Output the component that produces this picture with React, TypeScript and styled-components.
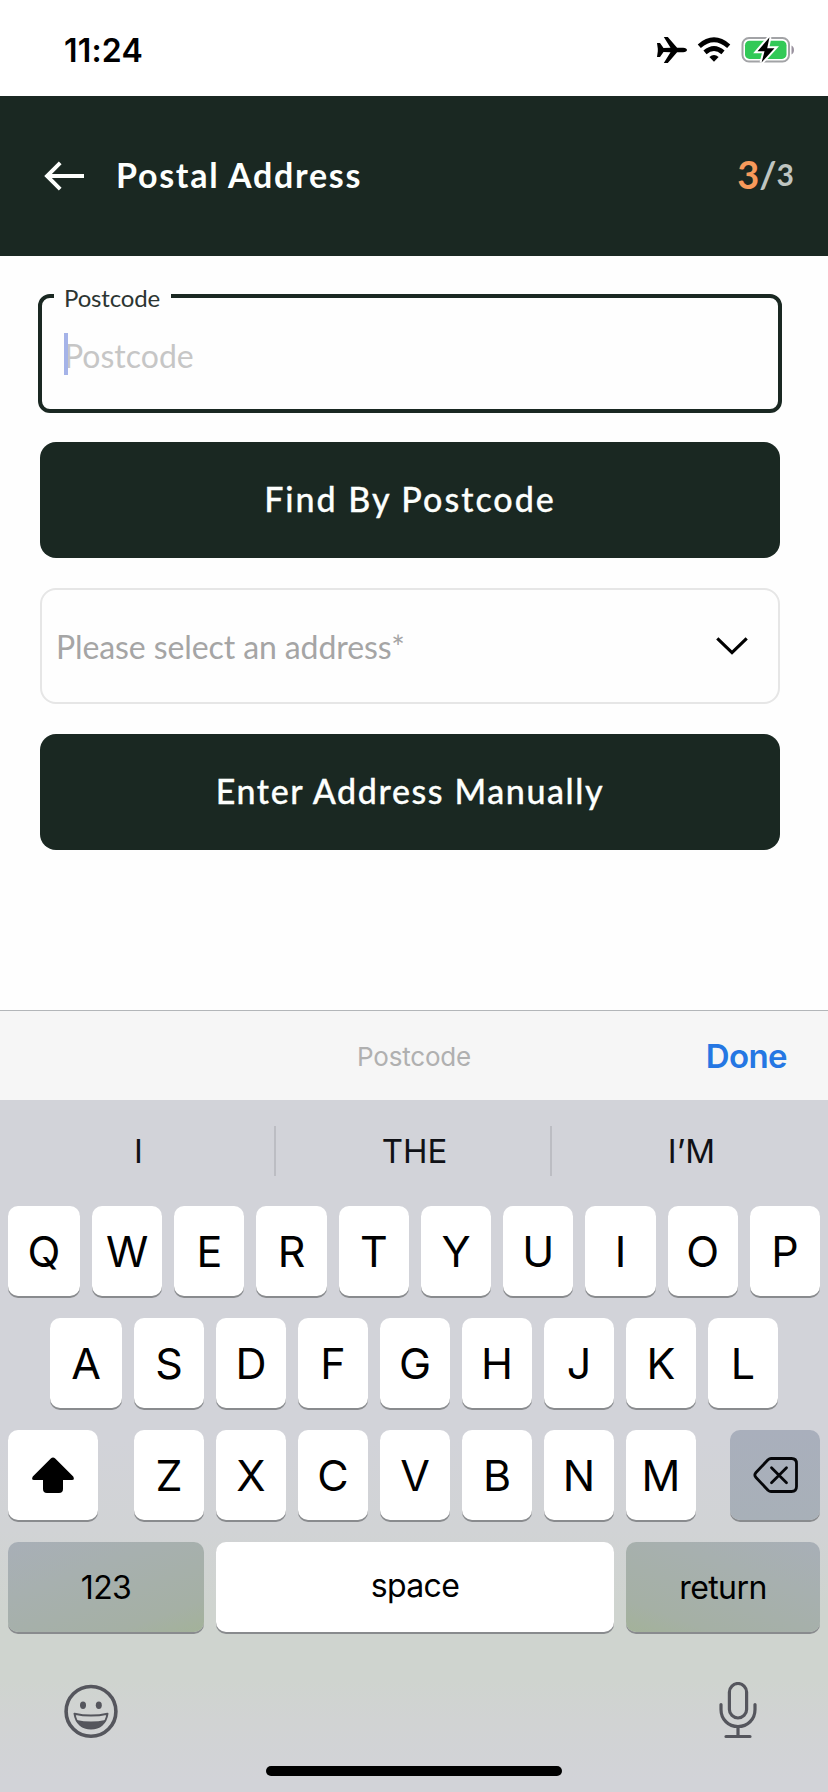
import React from "react";
import styled, { createGlobalStyle } from "styled-components";

const GlobalStyle = createGlobalStyle`
  * { box-sizing: border-box; }
  body { margin: 0; background: #fff; }
  button { border: 0; padding: 0; margin: 0; font: inherit; color: inherit; }
`;

const ink = "#1a2822";
const system = `Inter, "Liberation Sans", sans-serif`;
const brand = `Lato, "Open Sans", sans-serif`;

const Screen = styled.div`
  width: 828px;
  height: 1792px;
  display: flex;
  flex-direction: column;
  background: #fefefe;
  font-family: ${system};
  overflow: hidden;
`;

const StatusBar = styled.div`
  height: 96px;
  padding: 3px 33px 0 64px;
  display: flex;
  align-items: center;
  justify-content: space-between;
  background: #fff;
`;

const Clock = styled.span`
  padding-top: 1px;
  font-size: 32px;
  font-weight: 600;
  letter-spacing: 0.2px;
  color: #000;
`;

const StatusIcons = styled.div`
  display: flex;
  align-items: center;
  gap: 10px;
`;

const Header = styled.header`
  height: 160px;
  padding: 0 34px 0 44px;
  display: flex;
  align-items: center;
  background: ${ink};
  color: #fdfffd;
  font-family: ${brand};
`;

const Title = styled.h1`
  margin: 0 auto 4px 29px;
  font-size: 34px;
  font-weight: 700;
  letter-spacing: 1.7px;
`;

const Steps = styled.div`
  display: flex;
  align-items: center;
  font-weight: 700;
  line-height: 46px;
  margin-bottom: 4px;
  color: #bfc5c1;
`;

const Step = styled.span<{ $size: number; $color?: string }>`
  font-size: ${(p) => p.$size}px;
  color: ${(p) => p.$color ?? "inherit"};
`;

const Form = styled.main`
  height: 754px;
  padding: 38px 46px 0 38px;
  display: flex;
  flex-direction: column;
  font-family: ${brand};
`;

const Field = styled.div`
  position: relative;
  height: 119px;
  padding: 3px 22px 0;
  display: flex;
  align-items: center;
  border: 4px solid ${ink};
  border-radius: 12px;
`;

const FieldLabel = styled.label`
  position: absolute;
  left: 12px;
  top: -15px;
  padding: 0 11px 0 10px;
  background: #fefefe;
  font-size: 24px;
  line-height: 30px;
  letter-spacing: -0.15px;
  color: #2c3532;
`;

const Caret = styled.i`
  position: absolute;
  left: 22px;
  top: 35px;
  width: 4px;
  height: 42px;
  background: #a5b3e8;
`;

const Placeholder = styled.span`
  font-size: 32px;
  color: #c6c6c6;
`;

const Action = styled.button<{ $spacing: number }>`
  height: 116px;
  margin: 29px 2px 0;
  padding-bottom: 4px;
  border-radius: 16px;
  background: ${ink};
  color: #fdfffd;
  font-size: 34px;
  font-weight: 500;
  letter-spacing: ${(p) => p.$spacing}px;
  -webkit-text-stroke: 0.3px #fdfffd;
`;

const Select = styled.div`
  height: 116px;
  margin: 30px 2px 1px;
  padding: 0 29px 0 14px;
  display: flex;
  align-items: center;
  justify-content: space-between;
  border: 2px solid #e6e6e6;
  border-radius: 16px;
  font-size: 32px;
  letter-spacing: -0.1px;
  color: #a5a5a5;
`;

const Accessory = styled.div`
  height: 90px;
  border-top: 1px solid #b3b6b9;
  padding: 1px 41px 0;
  display: grid;
  grid-template-columns: 1fr auto 1fr;
  align-items: center;
  background: #f6f6f6;
`;

const AccessoryHint = styled.span`
  grid-column: 2;
  font-size: 26px;
  letter-spacing: -0.2px;
  color: #b0b0b0;
`;

const Done = styled.button`
  justify-self: end;
  background: none;
  font-size: 33px;
  font-weight: 600;
  letter-spacing: -0.6px;
  color: #2577e3;
`;

const Keyboard = styled.section`
  flex: 1;
  display: flex;
  flex-direction: column;
  background: linear-gradient(180deg, #d2d3d9 0, #d2d3d9 340px, #d1d3d5 430px, #cfd4cf 510px, #cfd4cf 580px, #d1d3d3 620px, #d2d3d8 680px);
  color: #000;
`;

const Suggestions = styled.div`
  height: 102px;
  margin-bottom: 4px;
  display: grid;
  grid-template-columns: repeat(3, 1fr);
  align-items: center;
`;

const Suggestion = styled.span`
  height: 50px;
  padding-left: 3px;
  display: flex;
  align-items: center;
  justify-content: center;
  font-size: 33px;
  color: #101116;
  border-right: 2px solid #bcbdc3;
  &:last-child { border-right: 0; }
`;

const Key = styled.button<{ $width?: number; $tone?: string; $small?: boolean; $lift?: number }>`
  flex: ${(p) => (p.$width ? `0 0 ${p.$width}px` : "1 1 0")};
  min-width: 0;
  display: flex;
  align-items: center;
  justify-content: center;
  padding-bottom: ${(p) => p.$lift ?? 0}px;
  border-radius: 10px;
  background: ${(p) => p.$tone ?? "#fff"};
  box-shadow: 0 2px 0 #898b8e;
  font-size: ${(p) => (p.$small ? 32 : 43)}px;
  font-weight: 400;
  letter-spacing: ${(p) => (p.$small ? "-0.6px" : "0")};
`;

const KeyRow = styled.div<{ $inset?: number }>`
  height: 90px;
  margin: 0 ${(p) => 8 + (p.$inset ?? 0)}px 22px;
  display: flex;
  gap: 12px;
`;

const Letters = styled.div`
  flex: 1;
  display: flex;
  gap: 12px;
  margin: 0 22px 0 24px;
`;

const BottomRow = styled.div`
  height: 110px;
  margin-top: 2px;
  padding: 0 70px 0 63px;
  display: flex;
  align-items: center;
  justify-content: space-between;
`;

const HomeBar = styled.div`
  width: 296px;
  height: 10px;
  margin: auto auto 16px;
  border-radius: 5px;
  background: #000;
`;

const Plane = () => (
  <svg width="31" height="28" viewBox="0 0 31 28">
    <path d="M1 7h3l3.500 5 7-.3L7.800 1h4l9.300 10.700 6 .1c2.500.2 3.900 1 3.900 2.200s-1.400 2-3.900 2.200l-6 .1L11.800 27h-4l6.700-10.700-7-.3L4 21H1l.8-5.800v-2.400Z" />
  </svg>
);

const Wifi = () => (
  <svg width="34" height="26" viewBox="0 0 34 26">
    <g fill="none" stroke="#000" strokeWidth="4.800">
      <path d="M2.300 9.200Q17-3.500 31.700 9.200" />
      <path d="M8 15.400Q17 7.700 26 15.400" />
    </g>
    <path d="M12.400 20Q17 16 21.600 20L17 24.700Z" />
  </svg>
);

const Battery = () => (
  <svg width="54" height="28" viewBox="0 0 54 28">
    <rect x="1.500" y="2" width="46.500" height="23.500" rx="6.500" fill="none" stroke="#a2a3a6" strokeWidth="2" />
    <rect x="4" y="4.700" width="41.500" height="18.200" rx="4.500" fill="#32c957" />
    <path d="M50.500 9.500c3.300 1.500 3.300 7.500 0 9Z" fill="#9a929f" />
    <path d="M28.500 1.200 16.500 15.300h7L20.600 26.500 33.500 12.200h-7.300Z" fill="#000" stroke="#fff" strokeWidth="4" paintOrder="stroke" />
  </svg>
);

const BackArrow = () => (
  <svg width="43" height="30" viewBox="0 0 43 30" fill="none" stroke="#fdfffd" strokeWidth="3.900">
    <path d="M40 15H3M16.200 1.800 3 15l13.200 13.200" />
  </svg>
);

const Chevron = () => (
  <svg width="34" height="20" viewBox="0 0 34 20" fill="none" stroke="#000" strokeWidth="3.200">
    <path d="M2.300 2.300 17 16.600 31.700 2.300" />
  </svg>
);

const Shift = () => (
  <svg width="44" height="38" viewBox="0 0 44 38">
    <path d="M19.800 2.500q2.200-2 4.400 0L42.200 20.500q1.800 3.500-1.200 3.500H32v9q0 4-4 4H16q-4 0-4-4V24H3q-3 0-1.200-3.500Z" />
  </svg>
);

const Backspace = () => (
  <svg width="46" height="38" viewBox="0 0 46 38" fill="none" stroke="#06070a" strokeWidth="2.800" strokeLinecap="round" strokeLinejoin="round">
    <path d="M19 2.500H39.500q5 0 5 5v23q0 5-5 5H19q-1.500 0-3-1.300L4 21.500q-2.300-2.500 0-5L16 3.800Q17.500 2.500 19 2.500Z" />
    <path d="m19.500 11.800 15 15m0-15-15 15" />
  </svg>
);

const Smile = () => (
  <svg width="56" height="56" viewBox="0 0 56 56">
    <circle cx="28" cy="28.400" r="24.900" fill="none" stroke="#55565d" strokeWidth="3.600" />
    <ellipse cx="20" cy="22.200" rx="3" ry="3.700" fill="#55565d" />
    <ellipse cx="35.800" cy="22.200" rx="3" ry="3.700" fill="#55565d" />
    <path d="M11.500 30.700Q28 34.500 44.500 30.700C43 41 36 45.500 28 45.500S13 41 11.500 30.700Z" fill="none" stroke="#55565d" strokeWidth="2" strokeLinejoin="round" />
    <path d="M13.500 37Q28 40 42.500 37C39.500 43 34 46 28 46S16.500 43 13.500 37Z" fill="#55565d" />
  </svg>
);

const Mic = () => (
  <svg width="40" height="58" viewBox="0 1.500 40 58" fill="none" stroke="#55565d" strokeWidth="3.200" strokeLinecap="round">
    <rect x="11.400" y="3" width="17.200" height="34.500" rx="8.600" />
    <path d="M3 24v5c0 10 7.500 17 17 17s17-7 17-17v-5M20 46v10M8 56h24" />
  </svg>
);

const keyGreenLeft = "linear-gradient(160deg, #a8afb7 0%, #a7b0af 35%, #a5b0a5 80%, #a3b299 100%)";
const keyGreenRight = "linear-gradient(200deg, #a8afb7 0%, #a7b0af 35%, #a5b0a5 80%, #a3b299 100%)";

export default function App() {
  return (
    <>
      <GlobalStyle />
      <Screen>
        <StatusBar>
          <Clock>11:24</Clock>
          <StatusIcons>
            <Plane />
            <Wifi />
            <Battery />
          </StatusIcons>
        </StatusBar>
        <Header>
          <BackArrow />
          <Title>Postal Address</Title>
          <Steps>
            <Step $size={38} $color="#f79a5b">3</Step>
            <Step $size={37}>/</Step>
            <Step $size={30}>3</Step>
          </Steps>
        </Header>
        <Form>
          <Field>
            <FieldLabel>Postcode</FieldLabel>
            <Placeholder>Postcode</Placeholder>
            <Caret />
          </Field>
          <Action $spacing={2}>Find By Postcode</Action>
          <Select>
            <span>Please select an address*</span>
            <Chevron />
          </Select>
          <Action $spacing={1.6}>Enter Address Manually</Action>
        </Form>
        <Accessory>
          <AccessoryHint>Postcode</AccessoryHint>
          <Done>Done</Done>
        </Accessory>
        <Keyboard>
          <Suggestions>
            <Suggestion>I</Suggestion>
            <Suggestion>THE</Suggestion>
            <Suggestion>I’M</Suggestion>
          </Suggestions>
          <KeyRow>
            {[..."QWERTYUIOP"].map((k, i) => <Key key={k} $width={i ? undefined : 72}>{k}</Key>)}
          </KeyRow>
          <KeyRow $inset={42}>
            {[..."ASDFGHJKL"].map((k, i) => <Key key={k} $width={i ? undefined : 72}>{k}</Key>)}
          </KeyRow>
          <KeyRow>
            <Key $width={90}><Shift /></Key>
            <Letters>
              {[..."ZXCVBNM"].map((k) => <Key key={k}>{k}</Key>)}
            </Letters>
            <Key $width={90} $tone="linear-gradient(#a9afbc, #a8b0b8)"><Backspace /></Key>
          </KeyRow>
          <KeyRow>
            <Key $width={196} $small $tone={keyGreenLeft}>123</Key>
            <Key $small $lift={4}>space</Key>
            <Key $width={194} $small $tone={keyGreenRight}>return</Key>
          </KeyRow>
          <BottomRow>
            <Smile />
            <Mic />
          </BottomRow>
          <HomeBar />
        </Keyboard>
      </Screen>
    </>
  );
}
